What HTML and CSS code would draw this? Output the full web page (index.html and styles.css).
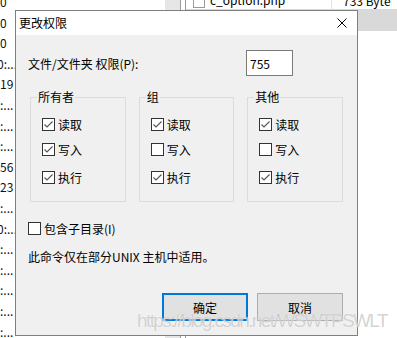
FILE: index.html
```html
<!DOCTYPE html>
<html lang="zh">
<head>
<meta charset="utf-8">
<title>更改权限</title>
<link rel="stylesheet" href="styles.css">
</head>
<body>
<div class="desk">
  <div class="list-left">
    <div>0</div><div>0</div><div>0</div><div class="cut">0:...</div><div>19</div>
    <div>:...</div><div>:...</div><div>:...</div><div>56</div><div>23</div>
    <div>:...</div><div class="cut">0:...</div><div>:...</div><div>:...</div><div>:...</div>
    <div>:...</div><div>:...</div>
  </div>
  <div class="scroll"></div>
  <div class="files">
    <div class="frow">
      <span class="ficon"></span>
      <span class="fname">c_option.php</span>
      <span class="fsize">733 Byte</span>
    </div>
    <div class="frow sel"></div>
  </div>
</div>

<div class="dialog">
  <div class="titlebar">
    <span class="title">更改权限</span>
    <svg class="close" width="10" height="10" viewBox="0 0 10 10"><path d="M0.5 0.5L9.5 9.5M9.5 0.5L0.5 9.5" stroke="#000" stroke-width="1" fill="none"/></svg>
  </div>
  <div class="body">
    <div class="perm-row">
      <span>文件/文件夹 权限(P):</span>
      <input class="field" type="text" value="755">
    </div>
    <div class="groups">
      <fieldset class="group">
        <legend>所有者</legend>
        <div class="checks">
          <div class="chk r1"><span class="box on"><svg width="11" height="11" viewBox="0 0 11 11"><path d="M1.5 5.5L4 8L9.5 2.5" stroke="#555" stroke-width="1.1" fill="none"/></svg></span><span class="lbl">读取</span></div>
          <div class="chk r2"><span class="box on"><svg width="11" height="11" viewBox="0 0 11 11"><path d="M1.5 5.5L4 8L9.5 2.5" stroke="#555" stroke-width="1.1" fill="none"/></svg></span><span class="lbl">写入</span></div>
          <div class="chk r3"><span class="box on"><svg width="11" height="11" viewBox="0 0 11 11"><path d="M1.5 5.5L4 8L9.5 2.5" stroke="#555" stroke-width="1.1" fill="none"/></svg></span><span class="lbl">执行</span></div>
        </div>
      </fieldset>
      <fieldset class="group">
        <legend>组</legend>
        <div class="checks">
          <div class="chk r1"><span class="box on"><svg width="11" height="11" viewBox="0 0 11 11"><path d="M1.5 5.5L4 8L9.5 2.5" stroke="#555" stroke-width="1.1" fill="none"/></svg></span><span class="lbl">读取</span></div>
          <div class="chk r2"><span class="box"></span><span class="lbl">写入</span></div>
          <div class="chk r3"><span class="box on"><svg width="11" height="11" viewBox="0 0 11 11"><path d="M1.5 5.5L4 8L9.5 2.5" stroke="#555" stroke-width="1.1" fill="none"/></svg></span><span class="lbl">执行</span></div>
        </div>
      </fieldset>
      <fieldset class="group">
        <legend>其他</legend>
        <div class="checks">
          <div class="chk r1"><span class="box on"><svg width="11" height="11" viewBox="0 0 11 11"><path d="M1.5 5.5L4 8L9.5 2.5" stroke="#555" stroke-width="1.1" fill="none"/></svg></span><span class="lbl">读取</span></div>
          <div class="chk r2"><span class="box"></span><span class="lbl">写入</span></div>
          <div class="chk r3"><span class="box on"><svg width="11" height="11" viewBox="0 0 11 11"><path d="M1.5 5.5L4 8L9.5 2.5" stroke="#555" stroke-width="1.1" fill="none"/></svg></span><span class="lbl">执行</span></div>
        </div>
      </fieldset>
    </div>
    <div class="chk sub"><span class="box"></span><span class="lbl">包含子目录(I)</span></div>
    <div class="note">此命令仅在部分UNIX 主机中适用。</div>
    <div class="buttons">
      <button class="btn primary">确定</button>
      <button class="btn">取消</button>
    </div>
  </div>
</div>

<div class="watermark">https://blog.csdn.net/WSWTPSWLT</div>
</body>
</html>
```

FILE: styles.css
```css
html, body {
  margin: 0;
  padding: 0;
  width: 397px;
  height: 338px;
  overflow: hidden;
  background: #fff;
}
body {
  position: relative;
  font-family: "Noto Sans CJK SC", "Noto Sans", sans-serif;
  font-size: 12px;
  color: #000;
}

/* background explorer */
.desk {
  display: flex;
  height: 338px;
}
.list-left {
  width: 165px;
  margin-top: -8px;
  line-height: 20.6px;
  font-size: 12px;
  color: #111;
  overflow: hidden;
}
.list-left .cut {
  text-indent: -3px;
}
.scroll {
  width: 15px;
  background: #e6e6e6;
  border-right: 1px solid #9a9a9a;
}
.files {
  flex: 1;
  margin-left: 4px;
  border-left: 1px solid #9a9a9a;
}
.frow {
  display: flex;
  align-items: center;
  height: 20px;
  margin-top: -10px;
  white-space: nowrap;
}
.ficon {
  width: 10px;
  height: 13px;
  margin-left: 7px;
  border: 1px solid #9a9a9a;
  background: #fff;
}
.fname {
  width: 121px;
  margin-left: 5px;
  border-right: 1px solid #e3e3e3;
  height: 20px;
  line-height: 20px;
}
.fsize {
  padding-left: 11px;
}
.frow.sel {
  margin-top: -1px;
  height: 22px;
  background: #d9d9d9;
}

/* dialog window */
.dialog {
  position: absolute;
  left: 15px;
  top: 10px;
  width: 343px;
  height: 326px;
  box-sizing: border-box;
  border: 1px solid #7f7f7f;
  background: #f0f0f0;
  display: flex;
  flex-direction: column;
}
.titlebar {
  height: 24px;
  background: #fff;
  display: flex;
  align-items: center;
  justify-content: space-between;
  padding: 0 10px 1px 3px;
  box-sizing: border-box;
}
.close {
  display: block;
}
.body {
  flex: 1;
  padding: 0 14px 0 12px;
}
.perm-row {
  display: flex;
  align-items: center;
  height: 26px;
  margin-top: 15px;
}
.field {
  margin: 0 50px 0 auto;
  width: 47px;
  height: 26px;
  box-sizing: border-box;
  border: 1px solid #7a7a7a;
  background: #fff;
  padding: 0 0 0 3px;
  font-family: inherit;
  font-size: 12px;
  color: #000;
  outline: none;
}

.groups {
  display: flex;
  gap: 13px;
  margin-top: 14px;
  padding-left: 2px;
}
.group {
  margin: 0;
  padding: 0;
  width: 96px;
  min-width: 0;
  box-sizing: border-box;
  border: 1px solid #dcdcdc;
}
.group legend {
  padding: 0 1px;
  margin-left: 6px;
  line-height: 14px;
  font-size: 12px;
}
.checks {
  padding: 14px 0 17px 11px;
}
.chk {
  display: flex;
  align-items: center;
  height: 13px;
}
.chk.r2 { margin-top: 12px; }
.chk.r3 { margin-top: 15px; }
.box {
  width: 13px;
  height: 13px;
  box-sizing: border-box;
  border: 1px solid #333;
  background: #fff;
  display: flex;
}
.box svg { display: block; }
.lbl {
  margin-left: 3px;
  line-height: 13px;
  white-space: nowrap;
}
.chk.sub {
  margin-top: 20px;
}
.note {
  margin-top: 14px;
  line-height: 16px;
}
.buttons {
  display: flex;
  justify-content: flex-end;
  gap: 9px;
  margin-top: 28px;
}
.btn {
  width: 86px;
  height: 28px;
  box-sizing: border-box;
  border: 1px solid #adadad;
  background: #e1e1e1;
  font-family: inherit;
  font-size: 12px;
  color: #000;
  padding: 0;
  margin: 0;
}
.btn.primary {
  border: 2px solid #0078d7;
}

.watermark {
  position: absolute;
  left: 137px;
  top: 311px;
  font-family: "Liberation Sans", Arial, sans-serif;
  font-size: 19px;
  line-height: 19px;
  letter-spacing: -1.6px;
  color: rgba(150, 150, 150, 0.42);
  text-shadow: 0 0 1px rgba(255, 255, 255, 0.95);
  white-space: nowrap;
  pointer-events: none;
}
```
